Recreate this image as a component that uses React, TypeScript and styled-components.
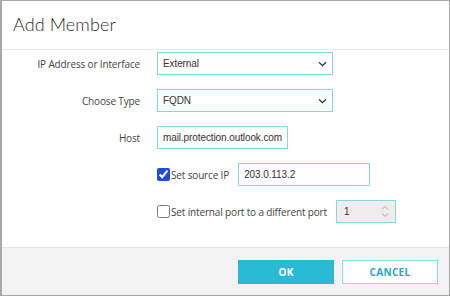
import React from "react";
import styled, { createGlobalStyle } from "styled-components";

const Global = createGlobalStyle`
  html, body { margin: 0; padding: 0; background: #fff; }
  * { box-sizing: border-box; }
`;

const Dialog = styled.div`
  width: 450px;
  height: 296px;
  border: 1px solid #a8a8a8;
  border-left-width: 2px;
  display: flex;
  flex-direction: column;
  background: #fff;
  font-family: "Open Sans", "Noto Sans", sans-serif;
`;

const Header = styled.div`
  height: 49px;
  flex: none;
  border-bottom: 1px solid #e6e6e6;
  display: flex;
  align-items: center;
  padding-left: 11px;
  padding-bottom: 2px;
`;

const Title = styled.h1`
  margin: 0;
  font-family: "Lato", sans-serif;
  font-weight: 300;
  font-size: 18px;
  color: #2e2e2e;
  letter-spacing: 0.1px;
`;

const Body = styled.div`
  flex: 1;
  display: grid;
  grid-template-columns: 138px auto;
  column-gap: 17px;
  row-gap: 14px;
  align-content: start;
  align-items: center;
  padding-top: 2px;
`;

const Label = styled.div`
  text-align: right;
  font-size: 10px;
  letter-spacing: -0.15px;
  color: #444;
`;

const Field = styled.div<{ $w: number }>`
  width: ${(p) => p.$w}px;
  height: 23px;
  border: 1px solid #84d6e8;
  display: flex;
  align-items: center;
  justify-content: space-between;
  padding: 0 5px 0 5px;
  font-family: "Liberation Sans", Arial, sans-serif;
  font-size: 10px;
  letter-spacing: -0.1px;
  color: #333;
  background: #fff;
`;

const NumField = styled(Field)`
  background: #eeeeee;
  padding: 0 6px 0 7px;
`;

const CheckRow = styled.div`
  grid-column: 2;
  display: flex;
  align-items: center;
`;

const Check = styled.label`
  display: flex;
  align-items: center;
  gap: 1px;
  font-size: 10px;
  letter-spacing: -0.15px;
  color: #444;
  margin-right: 9px;
  input {
    margin: 0;
    width: 13px;
    height: 13px;
    accent-color: #1d4fd6;
  }
`;

const Footer = styled.div`
  height: 48px;
  flex: none;
  border-top: 1px solid #e3e3e3;
  background: #f3f3f3;
  display: flex;
  align-items: center;
  justify-content: flex-end;
  gap: 8px;
  padding-right: 11px;
`;

const Button = styled.button<{ $primary?: boolean }>`
  width: 96px;
  height: 24px;
  font-family: "Open Sans", "Noto Sans", sans-serif;
  font-weight: 700;
  font-size: 10px;
  letter-spacing: 0.3px;
  border: 1px solid ${(p) => (p.$primary ? "#2bb7d2" : "#8fdcea")};
  background: ${(p) => (p.$primary ? "#2bbad5" : "#fff")};
  color: ${(p) => (p.$primary ? "#fff" : "#2aa6c4")};
  padding: 0;
`;

const Chevron = () => (
  <svg width="9" height="6" viewBox="0 0 9 6">
    <path d="M1 1.2 L4.5 4.6 L8 1.2" fill="none" stroke="#333" strokeWidth="1.3" />
  </svg>
);

const Spinner = () => (
  <svg width="8" height="13" viewBox="0 0 8 13">
    <path d="M1 4.5 L4 1.5 L7 4.5 M1 8.5 L4 11.5 L7 8.5" fill="none" stroke="#a0a0a0" strokeWidth="1" />
  </svg>
);

export default function App() {
  return (
    <>
      <Global />
      <Dialog>
        <Header>
          <Title>Add Member</Title>
        </Header>
        <Body>
          <Label>IP Address or Interface</Label>
          <Field $w={176}>
            <span>External</span>
            <Chevron />
          </Field>
          <Label>Choose Type</Label>
          <Field $w={176}>
            <span>FQDN</span>
            <Chevron />
          </Field>
          <Label>Host</Label>
          <Field $w={131}>
            <span>mail.protection.outlook.com</span>
          </Field>
          <CheckRow>
            <Check>
              <input type="checkbox" defaultChecked />
              Set source IP
            </Check>
            <Field $w={132}>
              <span>203.0.113.2</span>
            </Field>
          </CheckRow>
          <CheckRow>
            <Check>
              <input type="checkbox" />
              Set internal port to a different port
            </Check>
            <NumField $w={60}>
              <span>1</span>
              <Spinner />
            </NumField>
          </CheckRow>
        </Body>
        <Footer>
          <Button $primary>OK</Button>
          <Button>CANCEL</Button>
        </Footer>
      </Dialog>
    </>
  );
}
